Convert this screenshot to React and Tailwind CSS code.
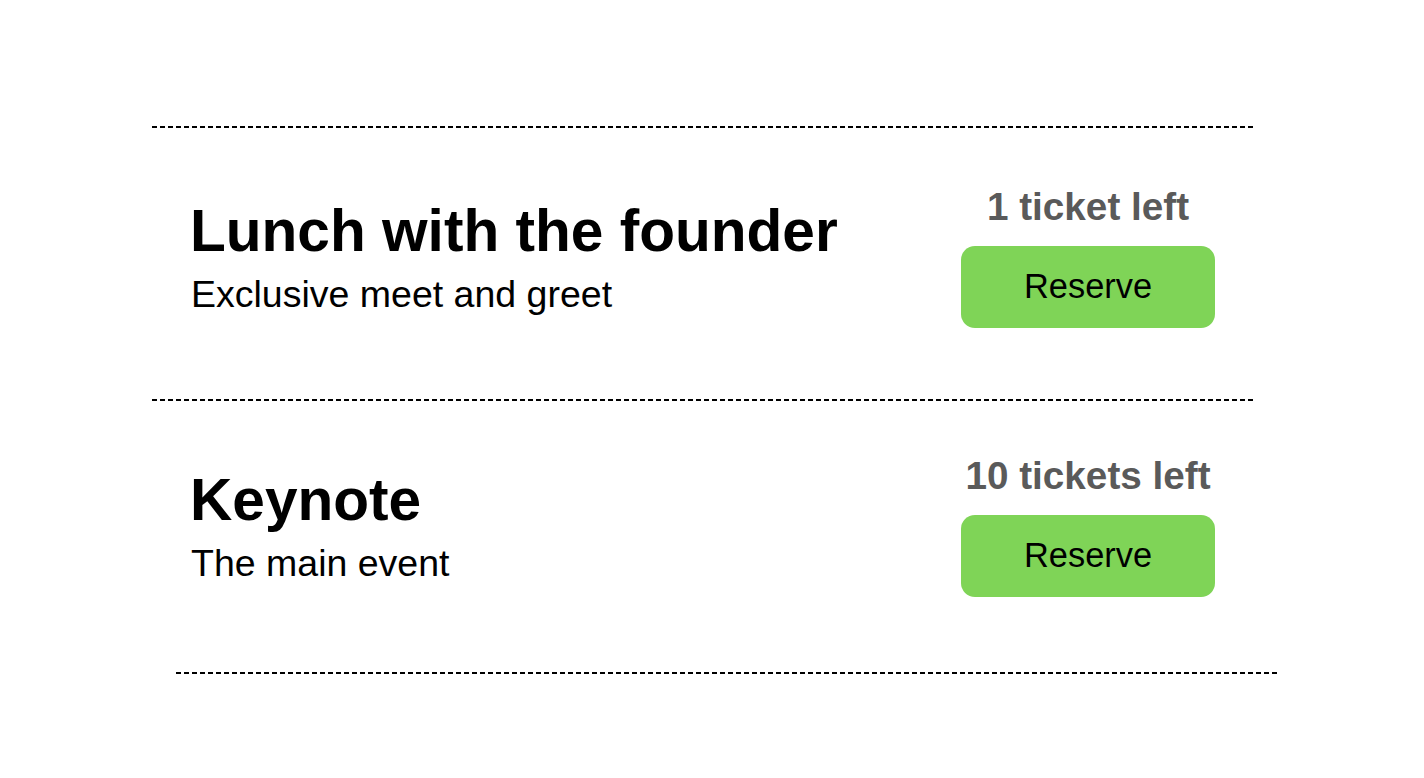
import React from 'react';

const events = [
  { id: 1, title: 'Lunch with the founder', subtitle: 'Exclusive meet and greet', left: '1 ticket left', pad: 'pb-[14px]' },
  { id: 2, title: 'Keynote', subtitle: 'The main event', left: '10 tickets left', pad: 'pb-[22px]' },
];

const Divider = ({ className = '' }) => (
  <div className={`h-[2px] w-[1101px] bg-[repeating-linear-gradient(to_right,#000_0_5px,transparent_5px_8px)] ${className}`} />
);

const EventRow = ({ event }) => (
  <div className={`flex h-[271px] items-center justify-between pl-[38px] pr-[38px] ${event.pad}`}>
    <div className="flex flex-col">
      <h2 className="text-[58.6px] font-bold text-black">{event.title}</h2>
      <p className="mt-[9px] pl-[1px] text-[37.5px] text-black">{event.subtitle}</p>
    </div>
    <div className="flex w-[254px] flex-col items-center">
      <span className="whitespace-nowrap text-[38.7px] font-bold text-[#5a5a5a]">{event.left}</span>
      <button className="mt-[16px] flex h-[82px] w-[254px] items-center justify-center rounded-[14px] bg-[#7fd457] text-[34.4px] text-black">
        Reserve
      </button>
    </div>
  </div>
);

export default function App() {
  return (
    <div className="min-h-screen bg-white pt-[126px] font-['Liberation_Sans',Arial,sans-serif] leading-[1.149]">
      <div className="ml-[152px] w-[1101px]">
        <Divider />
        {events.map((e, i) => (
          <React.Fragment key={e.id}>
            <EventRow event={e} />
            {i < events.length - 1 ? <Divider /> : <Divider className="ml-[24px]" />}
          </React.Fragment>
        ))}
      </div>
    </div>
  );
}
